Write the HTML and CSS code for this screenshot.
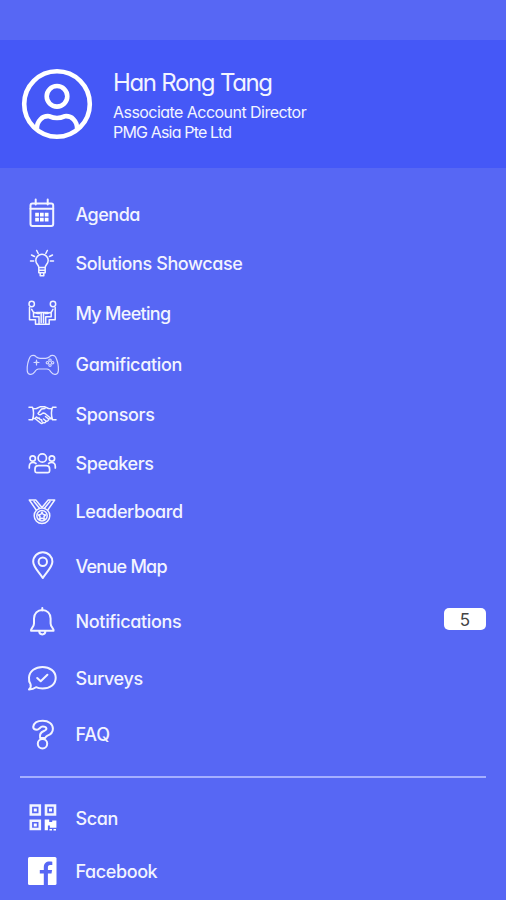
FILE: index.html
```html
<!DOCTYPE html>
<html lang="en">
<head>
<meta charset="utf-8">
<title>Menu</title>
<link rel="stylesheet" href="styles.css">
</head>
<body>
<div class="screen">
  <header class="profile">
    <svg class="avatar" viewBox="0 0 72 72">
      <circle cx="36" cy="36" r="32.8"/>
      <circle cx="36" cy="28.300" r="10.300"/>
      <path d="M16 61c-.5-8 5.500-13.700 12.500-12.700 5.500 2.500 9.500 2.500 15 0 7-1 13 4.700 12.500 12.700"/>
    </svg>
    <div class="identity">
      <h1 class="name">Han Rong Tang</h1>
      <p class="role">Associate Account Director</p>
      <p class="company">PMG Asia Pte Ltd</p>
    </div>
  </header>
  <nav>
    <ul class="menu main">
      <li class="item agenda">
        <svg class="icon" viewBox="0 0 36 40"><rect x="6.500" y="9.500" width="22.700" height="22.500" rx="2"/><path d="M6.500 14.800h22.700M11.700 5.500v5M23.700 5.500v5"/><path class="solid" d="M11.200 18.800h3.700v3.700h-3.700zM16 18.800h3.700v3.700H16zM20.800 18.800h3.700v3.700h-3.700zM11.200 23.800h3.700v3.700h-3.700zM16 23.800h3.700v3.700H16zM20.800 23.800h3.700v3.700h-3.700z"/></svg>
        <span class="label">Agenda</span>
      </li>
      <li class="item solutions">
        <svg class="icon thin" viewBox="0 0 36 40"><path d="M14.800 24.500c0-2.500-3-3.600-3-7a6.200 6.200 0 0 1 12.400 0c0 3.400-3 4.500-3 7zM14.800 24.500v5.300h6.400v-5.300M15 27.200h6M16.200 30v2.700h3.600V30M6.500 18h3.200M26.300 18h3.200M7.500 12l3 1.500M28.500 12l-3 1.500M12.700 7.500l1.500 3M23.300 7.500l-1.500 3"/></svg>
        <span class="label">Solutions Showcase</span>
      </li>
      <li class="item meeting">
        <svg class="icon thin" viewBox="0 0 36 40"><circle cx="7.700" cy="11" r="2.700"/><circle cx="29" cy="11" r="2.700"/><path d="M5.500 14.500v12.300h6v4.500h3.500v-7.500h-5.500v-4.500l4 1.200h2M31.200 14.500v12.300h-6v4.500h-3.500v-7.500h5.500v-4.500l-4 1.200h-2M9.500 19.300l-1.800-3M27.200 19.300l1.800-3M12.500 19.500h11.500M17.200 20v9.500M19.500 20v9.500M15 31.300h6.700"/></svg>
        <span class="label">My Meeting</span>
      </li>
      <li class="item games">
        <svg class="icon fine" viewBox="0 0 36 40"><path d="M12 12.700c-1.500-1.800-4.500-1.700-6 .3C4 17 3 22 3.200 26.500c.2 4.500 5 5.100 7.300 1.700 1.200-2.200 2.200-3.200 4-3.200h8.600c1.800 0 2.800 1 4 3.200 2.300 3.400 7.100 2.800 7.300-1.700.2-4.500-.8-9.500-2.800-13.500-1.500-2-4.500-2.100-6-.3-1.500 1.300-2.500 1.600-4 1.600h-5.600c-1.500 0-2.500-.3-4-1.600z"/><path d="M12.500 17v2.800M11.100 18.400h2.800"/><path d="M12.500 16v5M10 18.500h5"/><circle cx="26" cy="16.200" r="1.200"/><circle cx="28.600" cy="18.700" r="1.200"/><circle cx="23.400" cy="18.700" r="1.200"/><circle cx="26" cy="21.200" r="1.200"/></svg>
        <span class="label">Gamification</span>
      </li>
      <li class="item sponsors">
        <svg class="icon thin" viewBox="0 0 36 40"><path d="M5 13.300h3.500c1.500 4 1.500 8 0 12.500H5M32 13.300h-3.500c-1.500 4-1.500 8 0 12.500H32M9 14.800l3.500-.3 3.500-1.700h5l3.500 1.700 3.500.3M21 14.500l-3.500.5-3.500 4.500c1 2 3 1.500 5-.5l2 .5 6 5M9 24.500h2l5.500 4.500c1 .8 2 .5 2.500-.5 1.500.8 3 0 3-1.500 1.500.5 2.800-.5 2.500-2l3-.5M19.500 25l2.500 2M21.500 22.500l3 2.500M11 24.500l1.500-1.500 1.500 1.200 1.300-.2.700 1.500 1.500.2.500 1.800"/></svg>
        <span class="label">Sponsors</span>
      </li>
      <li class="item speakers">
        <svg class="icon mid" viewBox="0 0 36 40"><circle cx="18.300" cy="15" r="4.200"/><circle cx="8.700" cy="15.500" r="2.700"/><circle cx="27.900" cy="15.500" r="2.700"/><path d="M5.300 25v-1.500c0-2.500 1.300-4 3.700-4 1.300 0 2.200.3 3 1M31.300 25v-1.500c0-2.500-1.300-4-3.700-4-1.300 0-2.200.3-3 1"/><path d="M11 28v-2c0-2 1.300-3.300 3.300-3.300h8c2 0 3.300 1.300 3.300 3.300v2c0 1-.6 1.600-1.600 1.600H12.600c-1 0-1.600-.6-1.600-1.600z"/></svg>
        <span class="label">Speakers</span>
      </li>
      <li class="item leaders">
        <svg class="icon thin" viewBox="0 0 36 40"><path d="M5.300 9h6.500L18 16.500 24.200 9h6.500L24 18.700M5.300 9 12 18.700M10 10.500l5.800 7M26 10.500l-5.800 7"/><circle cx="18" cy="24.700" r="7.800"/><circle cx="18" cy="24.700" r="5.200"/><path d="M18 21.200l1.200 2.300 2.500.4-1.800 1.800.4 2.600-2.300-1.200-2.300 1.200.4-2.600-1.800-1.800 2.500-.4z"/></svg>
        <span class="label">Leaderboard</span>
      </li>
      <li class="item venue">
        <svg class="icon" viewBox="0 0 36 40"><path d="M18.800 32C15.500 26.500 9.200 21.200 9.200 15.800a9.600 9.600 0 0 1 19.200 0C28.400 21.200 22.100 26.500 18.800 32z"/><circle cx="18.800" cy="15.800" r="4.200"/></svg>
        <span class="label">Venue Map</span>
      </li>
      <li class="item alerts">
        <svg class="icon" viewBox="0 0 36 40"><path d="M18.300 7v2.500M7 29.700c-.5-2.500 3-3.200 3-7.200v-5c0-5 3.500-8.500 8.300-8.500s8.300 3.500 8.300 8.500v5c0 4 3.500 4.700 3 7.200zM15.200 30c0 4.500 6.200 4.500 6.200 0"/></svg>
        <span class="label">Notifications</span>
        <span class="badge">5</span>
      </li>
      <li class="item surveys">
        <svg class="icon" viewBox="0 0 36 40"><path d="M5 31.500c1.500-1.500 2.200-3.500 1.500-5.500C5 24 4.800 22 5 19.500 5.500 13 11.500 9 18.500 9s13.200 4 13.200 10.800-6 10.700-13.200 10.700c-2.500 0-4.500-.3-6.500-1.300-2 1.500-4.500 2.200-7 2.300zM13.200 20l3.500 3.300 6.700-6.600"/></svg>
        <span class="label">Surveys</span>
      </li>
      <li class="item faq">
        <svg class="icon" viewBox="0 0 36 40"><path d="M9.200 13C9.800 9 13.500 6.800 18.700 6.800c6 0 10.200 3.200 10.200 8 0 3.700-2.500 5.800-5.400 6.800-1.200.5-1.700 1.200-2.400 2.400h-5c-.8-4 .7-5.800 3.800-7 2-.8 2.700-1.500 2.500-2.500-.3-1.500-2-2-3.700-2-2.500 0-3.500 3.200-5.700 3.200-2 0-3.800-1-3.800-2.700z"/><circle cx="18.500" cy="29.800" r="4.700"/></svg>
        <span class="label">FAQ</span>
      </li>
    </ul>
    <hr class="divider">
    <ul class="menu extra">
      <li class="item scan">
        <svg class="icon" viewBox="0 0 36 40"><path class="frame" d="M6.800 7.500h9v9h-9zM22 7.500h9v9h-9zM6.800 22.800h9v8.200h-9z"/><path class="solid" d="M9.800 10.500h3v3h-3zM25 10.500h3v3h-3zM9.800 25.400h3v3h-3zM20.700 21.500h4.500v2.500h3v-1.500h4.200v7.300h-6.500v-2.200h-2v4.700h-3.200zM25.500 31h2.500v1.500h-2.500zM29.500 31h2.500v1.500h-2.500z"/></svg>
        <span class="label">Scan</span>
      </li>
      <li class="item facebook">
        <svg class="icon" viewBox="0 0 36 40"><rect class="solid" x="4" y="6" width="28.500" height="28" rx="1.500"/><path class="cut" d="M19.800 34V22.500h-4V19h4v-2.500c0-4.200 2.300-6 5.700-6 1.200 0 2.200.1 2.800.2V14h-2.100c-1.700 0-2.300.9-2.300 2.500V19h4.200l-.6 3.500h-3.600V34z"/></svg>
        <span class="label">Facebook</span>
      </li>
    </ul>
  </nav>
</div>
</body>
</html>
```

FILE: styles.css
```css
* { box-sizing: border-box; }

body {
  margin: 0;
  background: #5767f4;
  color: #f2f4ff;
  font-family: Inter, "Liberation Sans", sans-serif;
  font-feature-settings: "cv11" 1;
}

.screen {
  width: 506px;
  height: 900px;
  padding-top: 40px;
  overflow: hidden;
}

.profile {
  display: flex;
  gap: 20px;
  height: 128px;
  padding: 28px 21px;
  background: #4558f7;
}

.avatar {
  width: 72px;
  height: 72px;
  fill: none;
  stroke: #fff;
  stroke-width: 4.6;
}

.identity { white-space: nowrap; }

.name, .role, .company { margin: 0; font-weight: 400; }
.name { font-size: 24px; line-height: 30px; letter-spacing: -1.4px; word-spacing: 0.5px; }
.role, .company { font-size: 16px; line-height: 20px; letter-spacing: -0.54px; }
.role { margin-top: 4px; }
.company { letter-spacing: -0.83px; }

.menu {
  display: grid;
  margin: 0;
  padding: 0 20px 0 24px;
  list-style: none;
}

.main {
  grid-template-rows: 49px 50px 51px 50px 49px 48px 55px 55px 57px 56px 40px;
  padding-top: 26px;
}

.extra { grid-template-rows: 53px 40px; }

.item {
  display: flex;
  align-items: center;
  gap: 15.5px;
  height: 40px;
}

.icon {
  flex: none;
  width: 36px;
  height: 40px;
  fill: none;
  stroke: #f2f4ff;
  stroke-width: 2;
  stroke-linejoin: round;
  stroke-linecap: round;
}

.mid { stroke-width: 1.7; }
.thin { stroke-width: 1.5; }
.fine { stroke-width: 1.2; stroke: #d5daff; }
.solid { fill: #fff; stroke: none; }
.frame { stroke-width: 2.6; stroke-linejoin: miter; }
.cut { fill: #5767f4; stroke: none; }

.label {
  margin-top: 2px;
  font-size: 18px;
  line-height: 24px;
  font-weight: 450;
  letter-spacing: -0.4px;
  white-space: nowrap;
}

.agenda .label { letter-spacing: -0.5px; }
.meeting .label { letter-spacing: -0.7px; }
.games .label, .sponsors .label, .alerts .label { letter-spacing: -0.32px; }
.venue .label { letter-spacing: -0.75px; }
.faq .label { letter-spacing: -0.2px; }

.badge {
  width: 42px;
  height: 22px;
  margin: -5px 0 0 auto;
  border-radius: 5px;
  background: #fff;
  color: #444;
  font-size: 17px;
  line-height: 24px;
  text-align: center;
}

.divider {
  height: 2px;
  margin: 22px 20px 20px;
  border: 0;
  background: #a5afff;
}
```
